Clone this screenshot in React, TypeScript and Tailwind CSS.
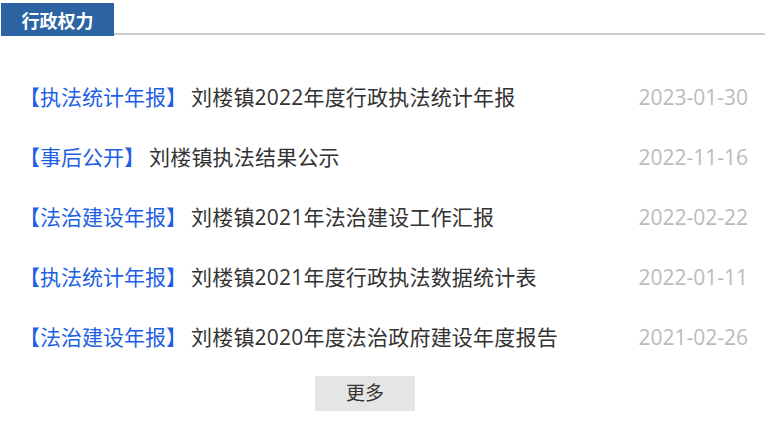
import React from "react";

const items = [
  { tag: "执法统计年报", title: "刘楼镇2022年度行政执法统计年报", date: "2023-01-30" },
  { tag: "事后公开", title: "刘楼镇执法结果公示", date: "2022-11-16" },
  { tag: "法治建设年报", title: "刘楼镇2021年法治建设工作汇报", date: "2022-02-22" },
  { tag: "执法统计年报", title: "刘楼镇2021年度行政执法数据统计表", date: "2022-01-11" },
  { tag: "法治建设年报", title: "刘楼镇2020年度法治政府建设年度报告", date: "2021-02-26" },
];

export default function App() {
  return (
    <div
      className="w-[767px] h-[429px] bg-white overflow-hidden"
      style={{ fontFamily: '"Open Sans", "Noto Sans CJK SC", sans-serif' }}
    >
      <div className="flex items-end pt-[3px] pl-[1px] pr-[2px]">
        <div className="w-[113px] h-[33px] bg-[#2c64a3] text-white text-[18px] font-bold flex items-center justify-center leading-none">
          <span style={{ fontFamily: '"Noto Sans CJK SC", sans-serif' }}>行政权力</span>
        </div>
        <div className="flex-1 h-[2px] bg-[#cccccc] mb-[1px]" />
      </div>
      <ul className="mt-[31px] pl-[19px] pr-[19px]">
        {items.map((it, i) => (
          <li key={i} className="h-[60px] flex items-center justify-between text-[21px] leading-none">
            <div className="flex items-center whitespace-nowrap">
              <span className="text-[#1f5fe4]">【{it.tag}】</span>
              <span className="text-[#333333] ml-[4px] tracking-[0.2px]">{it.title}</span>
            </div>
            <span className="text-[#bbbbbb]">{it.date}</span>
          </li>
        ))}
      </ul>
      <div className="flex mt-[9px] pl-[315px]">
        <button className="w-[100px] h-[35px] bg-[#e5e5e5] text-[#333333] text-[19px] leading-none flex items-center justify-center">
          更多
        </button>
      </div>
    </div>
  );
}
